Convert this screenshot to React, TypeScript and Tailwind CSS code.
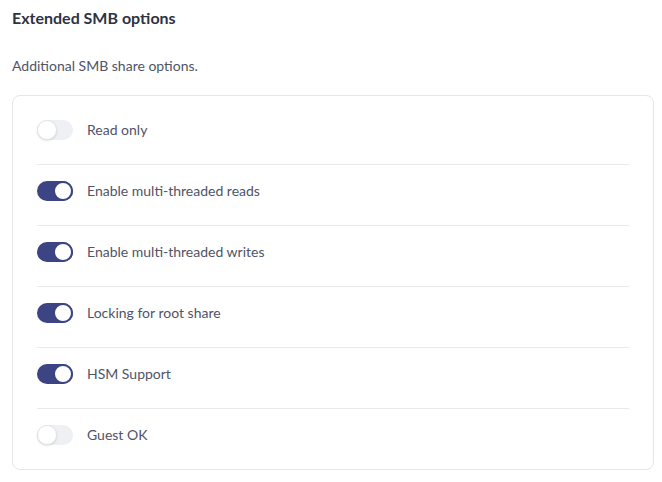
const options = [
  { label: 'Read only', on: false },
  { label: 'Enable multi-threaded reads', on: true },
  { label: 'Enable multi-threaded writes', on: true },
  { label: 'Locking for root share', on: true },
  { label: 'HSM Support', on: true },
  { label: 'Guest OK', on: false },
];

function Toggle({ on }: { on: boolean }) {
  return (
    <div
      className={`relative w-9 h-5 shrink-0 rounded-full ${on ? 'bg-[#3c4483]' : 'bg-[#eef0f4]'}`}
    >
      <div
        className={`absolute top-0 w-5 h-5 rounded-full bg-white ${
          on
            ? 'right-0 border-2 border-[#3c4483]'
            : 'left-0 border border-[#e3e5ea] shadow-[0_1px_2px_rgba(0,0,0,0.12)]'
        }`}
      />
    </div>
  );
}

export default function App() {
  return (
    <div className="min-h-[482px] bg-white pl-3 pr-2 pt-2 font-['Lato',sans-serif]">
      <h2 className="text-[16px] leading-5 font-bold text-[#2d3343]">Extended SMB options</h2>
      <p className="mt-7 mb-[19px] text-[14px] leading-5 text-[#4f5468]">
        Additional SMB share options.
      </p>

      <div className="border border-[#e6e7eb] rounded-lg px-6 pt-2">
        {options.map((opt, i) => (
          <div
            key={opt.label}
            className={`flex items-center gap-[14px] pt-4 pb-6 ${
              i < options.length - 1 ? 'border-b border-[#e8e9ed]' : ''
            }`}
          >
            <Toggle on={opt.on} />
            <span className="text-[14px] leading-5 text-[#4f5468] -mt-px">{opt.label}</span>
          </div>
        ))}
      </div>
    </div>
  );
}
